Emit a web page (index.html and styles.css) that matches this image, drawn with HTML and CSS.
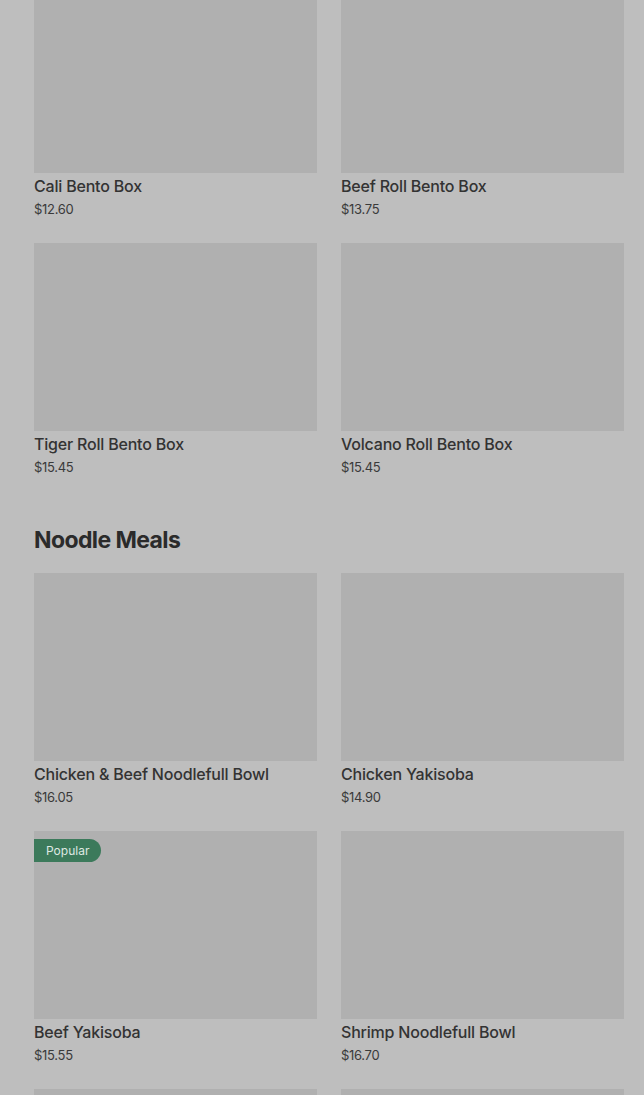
FILE: index.html
```html
<!DOCTYPE html>
<html lang="en">
<head>
    <meta charset="UTF-8">
    <meta name="viewport" content="width=device-width, initial-scale=1.0">
    <title>Menu</title>
    <link rel="stylesheet" href="styles.css">
</head>
<body>
    <div class="menu">
        <div class="section first">
            <div class="grid">
                <div class="item"><div class="thumb"></div><div class="name">Cali Bento Box</div><div class="price">$12.60</div></div>
                <div class="item"><div class="thumb"></div><div class="name">Beef Roll Bento Box</div><div class="price">$13.75</div></div>
                <div class="item"><div class="thumb"></div><div class="name">Tiger Roll Bento Box</div><div class="price">$15.45</div></div>
                <div class="item"><div class="thumb"></div><div class="name">Volcano Roll Bento Box</div><div class="price">$15.45</div></div>
            </div>
        </div>

        <div class="section">
            <h2>Noodle Meals</h2>
            <div class="grid">
                <div class="item"><div class="thumb"></div><div class="name">Chicken &amp; Beef Noodlefull Bowl</div><div class="price">$16.05</div></div>
                <div class="item"><div class="thumb"></div><div class="name">Chicken Yakisoba</div><div class="price">$14.90</div></div>
                <div class="item"><div class="thumb"><span class="badge">Popular</span></div><div class="name">Beef Yakisoba</div><div class="price">$15.55</div></div>
                <div class="item"><div class="thumb"></div><div class="name">Shrimp Noodlefull Bowl</div><div class="price">$16.70</div></div>
                <div class="item"><div class="thumb"></div></div>
                <div class="item"><div class="thumb"></div></div>
            </div>
        </div>
    </div>
</body>
</html>
```

FILE: styles.css
```css
body { margin: 0; background-color: #bebebe; font-family: Inter, "Noto Sans", sans-serif; color: #2e2e2e; overflow: hidden; }
.menu { padding: 0 20px 0 34px; margin-top: -15px; }
.section h2 { margin: 47px 0 17px; font-size: 23px; line-height: 32px; font-weight: 700; letter-spacing: -0.6px; color: #2b2b2b; }
.grid { display: grid; grid-template-columns: 283px 283px; column-gap: 24px; row-gap: 24px; }
.item { padding-bottom: 1px; }
.thumb { position: relative; height: 188px; background-color: #b0b0b0; }
.name { margin-top: 3px; font-size: 16px; line-height: 20px; font-weight: 500; color: #333; letter-spacing: -0.2px; }
.price { margin-top: 4px; font-size: 13px; line-height: 18px; color: #3a3a3a; letter-spacing: -0.3px; }
.badge { position: absolute; left: 0; top: 8px; height: 23px; line-height: 23px; padding: 0 12px; font-size: 12px; color: #dfe8e2; background-color: #3c7a5b; border-radius: 0 12px 12px 0; }
```
